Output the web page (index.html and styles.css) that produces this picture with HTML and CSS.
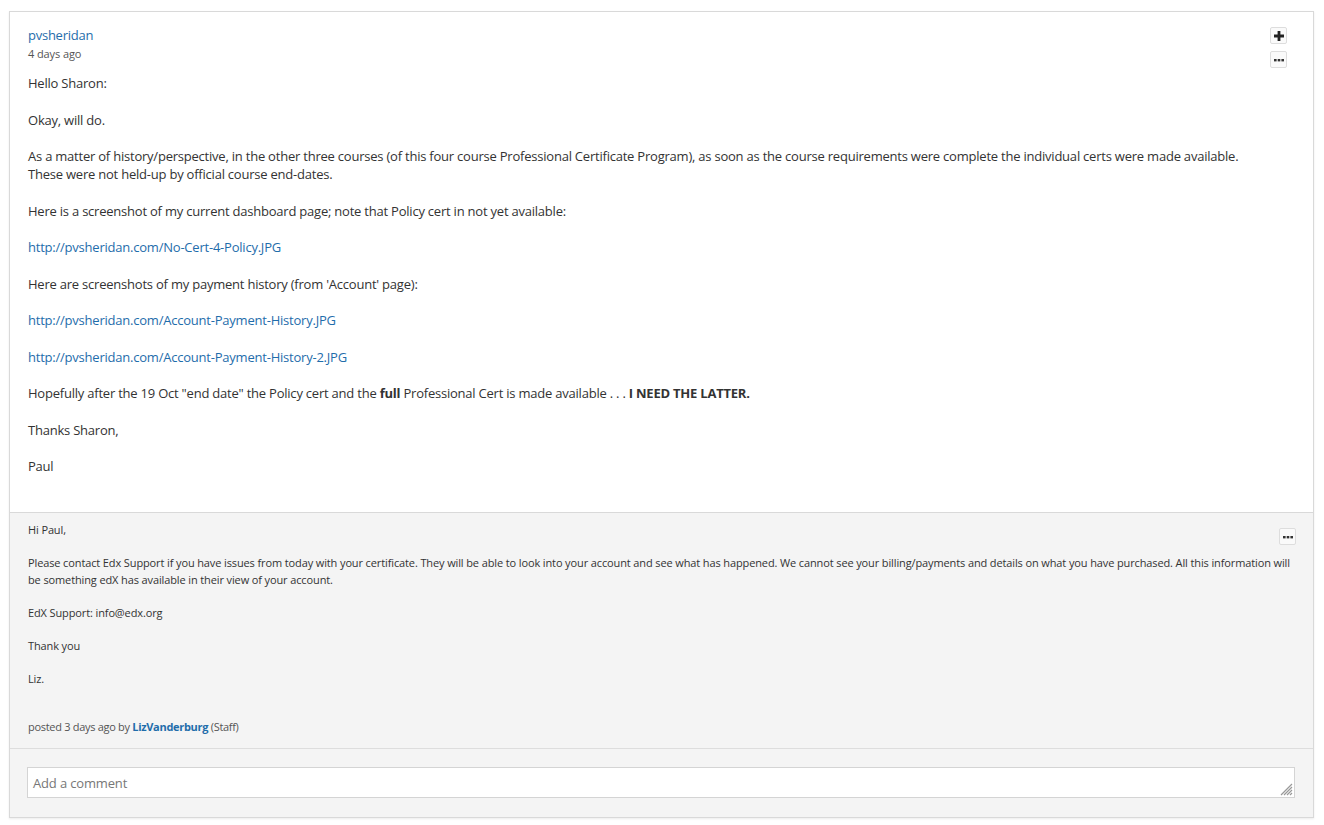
FILE: index.html
```html
<!DOCTYPE html>
<html lang="en">
  <head>
    <meta charset="UTF-8" />
    <title>Response</title>
    <link rel="stylesheet" href="styles.css">
  </head>
  <body>
    <div class="response">
      <div class="post">
        <div class="post-header">
          <div class="meta">
            <a class="author" href="#">pvsheridan</a>
            <div class="time">4 days ago</div>
          </div>
          <div class="actions">
            <button class="btn-icon">
              <svg width="10" height="10" viewBox="0 0 10 10"><path d="M3.6 0h2.8v3.6H10v2.8H6.4V10H3.6V6.4H0V3.6h3.6z" fill="#222"/></svg>
            </button>
            <button class="btn-icon">
              <svg width="10" height="4" viewBox="0 0 10 4"><rect x="0" y="1" width="2.6" height="2.4" fill="#333"/><rect x="3.7" y="1" width="2.6" height="2.4" fill="#333"/><rect x="7.4" y="1" width="2.6" height="2.4" fill="#333"/></svg>
            </button>
          </div>
        </div>
        <div class="post-body">
          <p>Hello Sharon:</p>
          <p>Okay, will do.</p>
          <p>As a matter of history/perspective, in the other three courses (of this four course Professional Certificate Program), as soon as the course requirements were complete the individual certs were made available.<br>These were not held-up by official course end-dates.</p>
          <p>Here is a screenshot of my current dashboard page; note that Policy cert in not yet available:</p>
          <p><a href="#">http://pvsheridan.com/No-Cert-4-Policy.JPG</a></p>
          <p>Here are screenshots of my payment history (from 'Account' page):</p>
          <p><a href="#">http://pvsheridan.com/Account-Payment-History.JPG</a></p>
          <p><a href="#">http://pvsheridan.com/Account-Payment-History-2.JPG</a></p>
          <p>Hopefully after the 19 Oct "end date" the Policy cert and the <strong>full</strong> Professional Cert is made available . . . <strong>I NEED THE LATTER.</strong></p>
          <p>Thanks Sharon,</p>
          <p>Paul</p>
        </div>
      </div>
      <div class="comments">
        <div class="comment">
          <div class="comment-body">
            <p>Hi Paul,</p>
            <p>Please contact Edx Support if you have issues from today with your certificate. They will be able to look into your account and see what has happened. We cannot see your billing/payments and details on what you have purchased. All this information will be something edX has available in their view of your account.</p>
            <p>EdX Support: info@edx.org</p>
            <p>Thank you</p>
            <p>Liz.</p>
          </div>
          <button class="btn-icon comment-menu">
            <svg width="10" height="4" viewBox="0 0 10 4"><rect x="0" y="1" width="2.6" height="2.4" fill="#333"/><rect x="3.7" y="1" width="2.6" height="2.4" fill="#333"/><rect x="7.4" y="1" width="2.6" height="2.4" fill="#333"/></svg>
          </button>
          <div class="comment-meta">posted 3 days ago by <a href="#">LizVanderburg</a> (Staff)</div>
        </div>
        <div class="comment-form">
          <textarea placeholder="Add a comment"></textarea>
          <svg class="grip" width="13" height="13" viewBox="0 0 13 13">
            <path d="M12 1L1 12M12 4L4 12M12 7L7 12M12 10L10 12" stroke="#999" stroke-width="1.2" fill="none"/>
          </svg>
        </div>
      </div>
    </div>
  </body>
</html>
```

FILE: styles.css
```css
body {
  margin: 0;
  padding: 11px 10px 8px 9px;
  font-family: "Open Sans", Arial, sans-serif;
  color: #333;
  background-color: #fff;
}
a {
  color: #1f6dab;
  text-decoration: none;
}
.response {
  border: 1px solid #d9d9d9;
  box-shadow: 0 1px 2px rgba(0, 0, 0, 0.08);
  background-color: #fff;
}
.post {
  padding: 14px 26px 37px 18px;
}
.post-header {
  display: flex;
  justify-content: space-between;
  align-items: flex-start;
}
.meta {
  font-size: 13px;
  line-height: 18px;
}
.author {
  display: block;
  letter-spacing: -0.25px;
}
.time {
  font-size: 11px;
  line-height: 20px;
  color: #555;
  letter-spacing: -0.1px;
}
.actions {
  display: flex;
  flex-direction: column;
  gap: 7px;
  margin-top: 1px;
}
.btn-icon {
  width: 17px;
  height: 17px;
  padding: 0;
  border: 1px solid #ddd;
  border-radius: 2px;
  background-color: #fafafa;
  display: flex;
  align-items: center;
  justify-content: center;
  cursor: pointer;
}
.post-body {
  font-size: 13px;
  line-height: 18.2px;
  letter-spacing: -0.22px;
  padding-top: 6px;
}
.post-body p {
  margin: 0 0 18.3px 0;
}
.post-body p:last-child {
  margin-bottom: 0;
}
.post-body strong {
  font-weight: 700;
}
.comments {
  background-color: #f4f4f4;
  border-top: 1px solid #d9d9d9;
}
.comment {
  position: relative;
  padding: 9px 18px 13px 18px;
  border-bottom: 1px solid #ddd;
}
.comment-body {
  font-size: 11px;
  line-height: 16.5px;
  letter-spacing: -0.12px;
  padding-right: 2px;
}
.comment-body p {
  margin: 0 0 16.5px 0;
}
.comment-menu {
  position: absolute;
  top: 15px;
  right: 17px;
}
.comment-meta {
  font-size: 11px;
  line-height: 16px;
  letter-spacing: -0.3px;
  color: #555;
  padding-top: 15px;
}
.comment-meta a {
  font-weight: 700;
}
.comment-form {
  position: relative;
  padding: 18px 18px 19px 17px;
}
.comment-form textarea {
  display: block;
  width: 100%;
  box-sizing: border-box;
  height: 31px;
  border: 1px solid #d4d4d4;
  padding: 6px 5px;
  font-family: "Open Sans", Arial, sans-serif;
  font-size: 13px;
  letter-spacing: -0.15px;
  color: #333;
  resize: none;
}
.comment-form textarea::placeholder {
  color: #777;
}
.grip {
  position: absolute;
  right: 20px;
  bottom: 21px;
}
```
